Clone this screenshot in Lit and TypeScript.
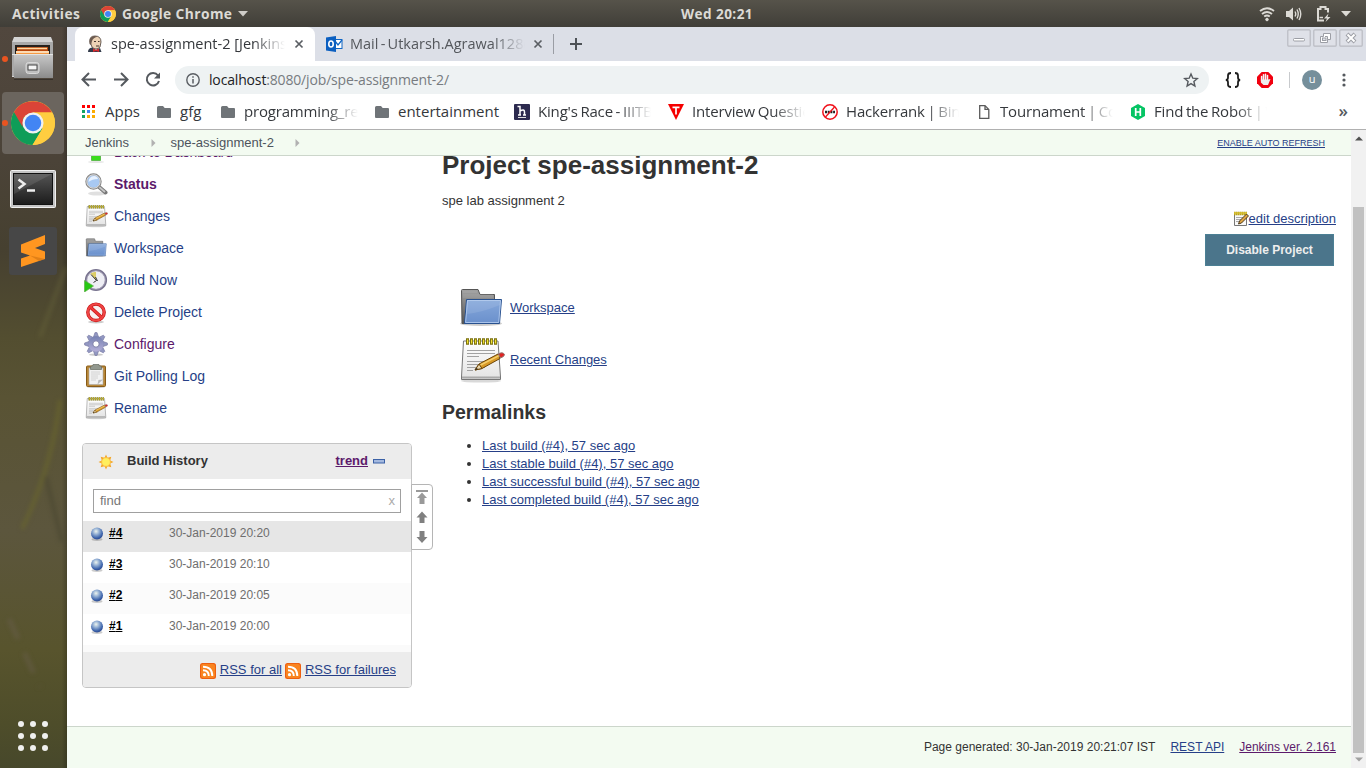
import { LitElement, html, css, svg, type TemplateResult } from "lit";
import { customElement } from "lit/decorators.js";

const chromeLogo = (size: number) => html`<svg width=${size} height=${size} viewBox="0 0 48 48">
  <circle cx="24" cy="24" r="24" fill="#fc3" />
  <path d="M24 24 L3.2 12 A24 24 0 0 0 23.5 48 L34.4 30Z" fill="#0f9d58" />
  <path d="M3.2 12 A24 24 0 0 1 44.8 12.5 H24 L13.6 18 L12.5 28Z" fill="#db4437" />
  <path d="M24 12.5 H45 A24 24 0 0 1 23.5 48 L34.4 30Z" fill="#ffcd40" />
  <circle cx="24" cy="24" r="11.5" fill="#f1f1f1" />
  <circle cx="24" cy="24" r="9" fill="#4285f4" />
</svg>`;

const filesIcon = html`<svg width="44" height="46" viewBox="0 0 44 46">
  <defs><linearGradient id="fl" x2="0" y2="1"><stop stop-color="#c9c9c9" /><stop offset="1" stop-color="#8b8b8b" /></linearGradient></defs>
  <path d="M3 1 H40 L42 6 V41 H1 V6Z" fill="#d4d4d4" />
  <path d="M1 6H42V40H1Z" fill="#a9a9a9" />
  <rect x="4" y="9" width="35" height="12" fill="#26211c" />
  <path d="M6 11H37V20H6Z" fill="#b8460c" /><path d="M6 12.500H36" stroke="#ffd9a0" stroke-width="1.500" />
  <path d="M5 15H38V20H5Z" fill="#f59a45" /><path d="M5 16H38" stroke="#fff0d8" stroke-width="1.500" />
  <path d="M1 18H42V42H3V18Z" fill="url(#fl)" /><path d="M1 18.500H42" stroke="#e4e4e4" />
  <rect x="15" y="26.500" width="13" height="11" rx="2.500" fill="#bfbfbf" stroke="#d9d9d9" />
  <rect x="17" y="29" width="9" height="5" fill="#f5f5f5" stroke="#444" />
  <path d="M3 43.500H42" stroke="#2d2924" opacity=".7" />
</svg>`;

const terminalIcon = html`<svg width="46" height="40" viewBox="0 0 46 40">
  <defs><linearGradient id="tg" x2="0" y2="1"><stop stop-color="#555" /><stop offset="1" stop-color="#1b1b1b" /></linearGradient></defs>
  <rect x=".5" y=".5" width="45" height="37" rx="1" fill="#c4c4c4" stroke="#f1f1f1" />
  <rect x="3.500" y="3.500" width="39" height="31" fill="url(#tg)" stroke="#111" />
  <path d="M4 4H42L4 24Z" fill="#fff" opacity=".1" />
  <path d="M8.500 9.500L14.500 14L8.500 18.500" fill="none" stroke="#eee" stroke-width="2.500" />
  <path d="M17 20.500H25" stroke="#eee" stroke-width="2.500" />
</svg>`;

const sublimeIcon = html`<svg width="48" height="48" viewBox="0 0 48 48">
  <rect width="48" height="48" rx="3" fill="#474747" />
  <path d="M12 17.500L36 8V17L26 21L36 24.500V32L12 40V31.500L21 28.500L12 25.500Z" fill="#ff9620" />
  <path d="M21 28.500L36 32L30 34Z" fill="#c96f10" opacity=".55" />
</svg>`;

const folder = html`<svg width="16" height="16" viewBox="0 0 16 16"><path d="M1.500 2H6L7.700 4H13Q14 4 14 5V13Q14 14 13 14H1Q0 14 0 13V3.500Q0 2 1.500 2Z" fill="#6f7478" /></svg>`;

const appsIcon = html`<svg width="16" height="16" viewBox="0 0 16 16">
  ${["#f00", "#f00", "#f00", "#13a463", "#4285f4", "#fbab00", "#13a463", "#fbab00", "#fbab00"].map(
    (c, i) => svg`<rect x=${(i % 3) * 5} y=${1 + Math.floor(i / 3) * 5} width="3" height="3" fill=${c} />`
  )}
</svg>`;

const hIcon = html`<svg width="16" height="16" viewBox="0 0 16 16"><rect width="16" height="16" rx="1" fill="#2c2a4f" />
  <path d="M3.500 2.500H6V11M4 11H7M6 7Q10.500 4.500 10.500 8V11M9 11H12" fill="none" stroke="#fff" stroke-width="1.500" /><path d="M4 13.500H12" stroke="#ddd" /></svg>`;

const tIcon = html`<svg width="16" height="16" viewBox="0 0 16 16"><path d="M0 0H16L8 16Z" fill="#f50000" /><path d="M4.500 3.300H11.500M8 3V10.500" stroke="#fff" stroke-width="1.700" /></svg>`;

const noIcon = html`<svg width="16" height="16" viewBox="0 0 16 16"><circle cx="8" cy="8" r="7.200" fill="#fff" stroke="#f0101a" stroke-width="1.500" />
  <path d="M3 8H13" stroke="#222" stroke-width="2.400" stroke-dasharray="2 .7" /><path d="M3.500 13L12.500 3" stroke="#f0101a" stroke-width="1.300" /></svg>`;

const pageIcon = html`<svg width="16" height="16" viewBox="0 0 16 16"><path d="M3.700 1.600H9L12.800 5.400V14.400H3.700Z M9 1.600V5.400H12.800" fill="none" stroke="#5a5a5a" stroke-width="1.300" /></svg>`;

const hackerIcon = html`<svg width="16" height="16" viewBox="0 0 16 16"><path d="M8 0L15 4V12L8 16L1 12V4Z" fill="#05c464" />
  <path d="M5.700 4V12M10.300 4V12M5.700 8H10.300" stroke="#fff" stroke-width="1.700" /></svg>`;

const jenkinsIcon = html`<svg width="16" height="18" viewBox="0 0 16 18">
  <path d="M3 7Q2 1 8 1Q14 1 14 7L13 12Q9 16 5 12Z" fill="#ecd2b5" stroke="#463b35" stroke-width=".8" />
  <path d="M2.500 9Q1.500 2 7 1L11 1.500Q6 2.500 5 6L4 10Z" fill="#6b5a50" />
  <path d="M7 6.500H9M11 6.500H12.500M9 11H12" stroke="#44372f" stroke-width="1" />
  <path d="M1 17Q1 13 5 12.500L9 15L13 13L14.500 17Z" fill="#333c4b" />
  <path d="M6 13.500L9 15L12 13.500V17L9 16L6 17Z" fill="#d52a2e" />
</svg>`;

const outlookIcon = html`<svg width="17" height="16" viewBox="0 0 17 16">
  <rect x="8" y="3.500" width="8" height="9" fill="#fff" stroke="#1066c4" /><path d="M9 5L12 9L16 4" fill="none" stroke="#1066c4" stroke-width="1.300" />
  <path d="M0 1.500L10 0V16L0 14.500Z" fill="#0b5fc0" /><ellipse cx="5" cy="8" rx="2.200" ry="3" fill="none" stroke="#fff" stroke-width="1.600" /></svg>`;

const notepad = (s: number) => html`<svg width=${s} height=${s} viewBox="0 0 48 48">
  <defs><linearGradient id="np" x2="0" y2="1"><stop stop-color="#fff" /><stop offset="1" stop-color="#e3e3e3" /></linearGradient></defs>
  <ellipse cx="24" cy="45" rx="20" ry="1.600" fill="#000" opacity=".15" />
  <path d="M6.500 5H41L43.500 41V43.500H4.500V41Z" fill="url(#np)" stroke="#777" />
  <path d="M5 41.500H43" stroke="#aaa" stroke-width="2" />
  <path d="M10 14.500H38M10 17.500H38M10 20.500H22M10 25.500H36M10 28.500H30M10 31.500H28M10 34.500H16" stroke="#a2a2a2" />
  <path d="M9 5.500H41" stroke="#7a7010" stroke-width="6.500" stroke-dasharray="3 1" />
  <path d="M10 5.500H40" stroke="#f0e030" stroke-width="4" stroke-dasharray="1.200 2.800" />
  <path d="M18 34L22 28L41 18L43 22.500L25 32.500Z" fill="#d99a27" stroke="#6b4508" />
  <path d="M23.500 29L42 19.600" stroke="#f5cf6d" stroke-width="1.500" />
  <path d="M18 34L22 28L25 32.500Z" fill="#e9d6ae" stroke="#6b4508" /><path d="M18 34L19.500 32L21 33Z" fill="#222" />
  <path d="M41.500 17.800Q46 15.500 47.500 18.500Q47.500 20.500 43.500 22Z" fill="#e02323" stroke="#8f7770" />
</svg>`;

const notepadSmall = html`<svg width="16" height="16" viewBox="0 0 16 16">
  <path d="M.5 2H12.500V14.500H.5Z" fill="#fafafa" stroke="#777" />
  <path d="M2 6.500H9M2 8.500H7M2 10.500H6" stroke="#aaa" />
  <path d="M0 2.500H13" stroke="#a89010" stroke-width="3.500" stroke-dasharray="1.600 .4" /><path d="M.5 2.300H13" stroke="#f8df3a" stroke-width="2.400" stroke-dasharray="1 1" />
  <path d="M4.500 13L5.500 10L12.500 3L14.500 5L7.500 12Z" fill="#dfa545" stroke="#3c2a10" stroke-width=".9" />
</svg>`;

const folderBlue = (s: number) => html`<svg width=${s} height=${s} viewBox="0 0 48 48">
  <defs><linearGradient id="fb" x2="0" y2="1"><stop stop-color="#86a8db" /><stop offset="1" stop-color="#6a90cc" /></linearGradient>
  <linearGradient id="fg" x2="0" y2="1"><stop stop-color="#a2a2a2" /><stop offset="1" stop-color="#555" /></linearGradient></defs>
  <ellipse cx="24" cy="39.500" rx="21" ry="2.500" fill="#000" opacity=".2" />
  <path d="M4.500 6.500Q4.500 5.500 5.500 5.500H21L23 10.500H37.500V39.500H5Z" fill="url(#fg)" stroke="#555" />
  <path d="M6 8H20M6 11H36M6 13H36" stroke="#bbb" stroke-width=".7" opacity=".5" />
  <path d="M9.500 15.500H44.500L42.500 39.500H7.500Z" fill="url(#fb)" stroke="#28518f" />
  <path d="M10.500 16.500H43.500L41.700 38.500H8.600Z" fill="none" stroke="#a9c3ea" />
  <path d="M10 30Q23 29 43 21L44 16H10Z" fill="#fff" opacity=".1" />
</svg>`;

const statusIcon = html`<svg width="24" height="24" viewBox="0 0 24 24">
  <ellipse cx="13" cy="21.500" rx="9" ry="2" fill="#000" opacity=".12" />
  <path d="M14.500 14.500L21.500 20.500" stroke="#777" stroke-width="4" stroke-linecap="round" /><path d="M14.500 14.500L21 20" stroke="#c5c5c5" stroke-width="1.800" />
  <circle cx="9.500" cy="9.500" r="7.200" fill="#a8c9f3" stroke="#888" stroke-width="2" /><circle cx="9.500" cy="9.500" r="6.700" fill="none" stroke="#e2e2e2" />
  <path d="M4.500 10Q5 4.500 10 4Q13 4 14 7Q8 7 4.500 10Z" fill="#e8f2ff" />
</svg>`;

const buildIcon = html`<svg width="24" height="24" viewBox="0 0 24 24">
  <circle cx="12" cy="12" r="10" fill="#eeeef4" stroke="#77728e" stroke-width="2.200" /><circle cx="12" cy="12" r="9.300" fill="none" stroke="#b4b0c4" stroke-width=".7" />
  <path d="M12 12L6.500 5.500Q9 3.500 12 4Z" fill="#dccd68" /><path d="M7 6.500L12.500 12.500L9.500 14.500M11.500 9L13.500 13" fill="none" stroke="#333" stroke-width="1" />
  <path d="M.5 12.500L9.500 18L.5 24Z" fill="#28c814" stroke="#5fae4c" stroke-width=".7" />
</svg>`;

const deleteIcon = html`<svg width="24" height="24" viewBox="0 0 24 24">
  <ellipse cx="12" cy="22" rx="8" ry="1.500" fill="#000" opacity=".2" />
  <circle cx="12" cy="12.300" r="8.200" fill="#f7f1f1" stroke="#c71616" stroke-width="3.400" /><path d="M6 6.800L18 17.800" stroke="#c71616" stroke-width="3.400" />
  <circle cx="12" cy="12.300" r="8.200" fill="none" stroke="#f04646" stroke-width="2" /><path d="M6 6.800L18 17.800" stroke="#ef3b3b" stroke-width="2" />
</svg>`;

const gearIcon = html`<svg width="24" height="24" viewBox="0 0 24 24">
  <defs><linearGradient id="gr" gradientUnits="userSpaceOnUse" x1="0" y1="0" x2="0" y2="23"><stop stop-color="#6474a8" /><stop offset="1" stop-color="#c3b9e0" /></linearGradient></defs>
  <ellipse cx="12" cy="22.700" rx="7" ry="1.200" fill="#000" opacity=".2" />
  <g fill="#9298c2" stroke="#7a7ba4" stroke-width=".7">${[0, 45, 90, 135, 180, 225, 270, 315].map(
    (a) => svg`<path d="M9.500 5L11 .6H13L14.500 5Z" transform="rotate(${a} 12 12)" />`
  )}</g>
  <circle cx="12" cy="12" r="7.700" fill="url(#gr)" /><circle cx="12" cy="12" r="3.200" fill="#fff" stroke="#7474a0" stroke-width=".9" />
</svg>`;

const clipIcon = html`<svg width="24" height="24" viewBox="0 0 24 24">
  <ellipse cx="12" cy="23" rx="9" ry="1" fill="#000" opacity=".2" />
  <rect x="2.500" y="2" width="19" height="20.500" rx="1" fill="#b98838" stroke="#885b17" />
  <path d="M5 4H19V20.500H5Z" fill="#f2f2f2" stroke="#aaa" stroke-width=".6" />
  <path d="M7 8H16M7 10H16M7 12H14M7 14H14M7 16H12" stroke="#ccc" stroke-width=".8" />
  <path d="M13.500 20.500L14.500 16L19 15.500Z" fill="#b9b9b9" /><path d="M6.500 5.500V2.500L9 1.500V.5H15V1.500L17.500 2.500V5.500Z" fill="#92988e" stroke="#666c62" stroke-width=".7" />
</svg>`;

const upIcon = html`<svg width="24" height="24" viewBox="0 0 24 24"><path d="M7.500 20.500V12H2L12 1L22 12H16.500V20.500Z" fill="#3add1c" stroke="#208d0e" stroke-width=".5" /><ellipse cx="12" cy="22" rx="8" ry="1" fill="#000" opacity=".1" /></svg>`;

const sunIcon = html`<svg width="16" height="16" viewBox="0 0 16 16">
  <path d="M8 .5L9.500 3.800L13.300 2.700L12.200 6.500L15.500 8L12.200 9.500L13.300 13.300L9.500 12.200L8 15.500L6.500 12.200L2.700 13.300L3.800 9.500L.5 8L3.800 6.500L2.700 2.700L6.500 3.800Z" fill="#f4a82a" />
  <circle cx="8" cy="8" r="4.300" fill="#ffef5e" stroke="#fbc14a" stroke-width=".8" /></svg>`;

const ball = html`<svg width="16" height="16" viewBox="0 0 16 16">
  <defs><radialGradient id="bl" cx=".42" cy=".32" r=".65"><stop stop-color="#edf4ee" /><stop offset=".4" stop-color="#94b0d4" /><stop offset=".85" stop-color="#3c63ab" /><stop offset="1" stop-color="#304f95" /></radialGradient></defs>
  <ellipse cx="8" cy="13.500" rx="5.500" ry="1.400" fill="#000" opacity=".2" /><circle cx="8" cy="7.500" r="6" fill="url(#bl)" /></svg>`;

const rss = html`<svg width="16" height="16" viewBox="0 0 16 16"><rect width="16" height="16" rx="2.500" fill="#ed5f10" /><rect x="1" y="1" width="14" height="14" rx="2" fill="#f98420" />
  <circle cx="4.500" cy="11.700" r="1.600" fill="#fff" /><path d="M3 7.200Q8.800 7.200 8.800 13M3 3.700Q12.300 3.700 12.300 13" fill="none" stroke="#fff" stroke-width="1.900" /></svg>`;

const xIcon = html`<svg width="10" height="10" viewBox="0 0 10 10"><path d="M1.500 1.500L8.500 8.500M8.500 1.500L1.500 8.500" stroke="#5a5e63" stroke-width="1.700" /></svg>`;

const arrowMark = html`<svg width="5" height="8" viewBox="0 0 5 8"><path d="M.5 0L4.500 4L.5 8Z" fill="#b1b1b1" /></svg>`;

const bookmarks: { icon: TemplateResult; label: string; width: number; kind: string }[] = [
  { icon: appsIcon, label: "Apps", width: 35, kind: "near" },
  { icon: folder, label: "gfg", width: 24, kind: "near" },
  { icon: folder, label: "programming_resources", width: 114, kind: "near long" },
  { icon: folder, label: "entertainment", width: 99, kind: "near snug" },
  { icon: hIcon, label: "King's Race - IIITB", width: 113, kind: "long" },
  { icon: tIcon, label: "Interview Questions", width: 113, kind: "long" },
  { icon: noIcon, label: "Hackerrank | Binary", width: 113, kind: "long" },
  { icon: pageIcon, label: "Tournament | Code", width: 113, kind: "long" },
  { icon: hackerIcon, label: "Find the Robot | W", width: 113, kind: "long" },
];

@customElement("desktop-bar")
class DesktopBar extends LitElement {
  static styles = css`
    :host { display: grid; grid-template-columns: 681px 74px 1fr; height: 27px; align-items: center; color: #dcdad5;
      background: linear-gradient(#56534a, #403e38); font: 700 13.8px/26px "Open Sans", sans-serif; }
    .left, .right { display: flex; align-items: center; }
    .left { padding-left: 12px; }
    .act { width: 88px; letter-spacing: .42px; }
    .app { width: 110px; margin: 0 6px 0 6px; white-space: nowrap; letter-spacing: .4px; }
    .clock { white-space: nowrap; font-size: 13.6px; letter-spacing: .42px; }
    .right { justify-content: flex-end; padding-right: 15px; }
    svg { display: block; flex: none; }
    .wifi { margin-right: 11px; } .vol { margin-right: 14px; } .bat { margin-right: 9px; }
  `;
  render() {
    return html`
      <div class="left"><span class="act">Activities</span>${chromeLogo(16)}<span class="app">Google Chrome</span>
        <svg width="10" height="6" viewBox="0 0 10 6"><path d="M0 0H10L5 5.500Z" fill="#cfcdc8" /></svg></div>
      <div class="clock">Wed 20:21</div>
      <div class="right">
        <svg class="wifi" width="16" height="16" viewBox="0 0 16 16" fill="none" stroke="#dcdad5" stroke-width="1.900"><path d="M1 5Q8-.5 15 5M3 8Q8 4 13 8M5.200 10.600Q8 8.500 10.800 10.600" /><circle cx="8" cy="13.500" r="1.300" fill="#dcdad5" stroke-width="1" /></svg>
        <svg class="vol" width="16" height="16" viewBox="0 0 16 16"><path d="M0 5H3L7 1.500V14.500L3 11H0Z" fill="#dcdad5" /><path d="M9 5.500Q10.500 8 9 10.500M11 3.500Q13.500 8 11 12.500M13 2Q16.500 8 13 14" fill="none" stroke="#dcdad5" stroke-width="1.400" /></svg>
        <svg class="bat" width="16" height="16" viewBox="0 0 16 16"><path d="M8 14.500H2V3H4.500V1H9.500V3H12V6.500" fill="none" stroke="#dcdad5" stroke-width="2" /><path d="M3.500 11.500H7" stroke="#dcdad5" stroke-width="1.500" /><path d="M12.500 7.500L8 12.500H11L9.500 16L14.500 11H11.500Z" fill="#dcdad5" /></svg>
        <svg width="10" height="6" viewBox="0 0 10 6"><path d="M0 0H10L5 5.500Z" fill="#dcdad5" /></svg>
      </div>`;
  }
}

@customElement("app-dock")
class AppDock extends LitElement {
  static styles = css`
    :host { display: flex; flex-direction: column; width: 67px; position: relative; overflow: hidden;
      background: linear-gradient(90deg, #0000 92%, #0003), linear-gradient(#51473e 0, #4b4338 18%, #464030 30%, #534e30 42%, #595334 50%, #5c563d 68%, #58542d 84%, #4e4d2a 94%, #47482b 100%); }
    svg { display: block; }
    .grass { position: absolute; inset: 0; filter: blur(2px); }
    .slot { display: flex; align-items: center; justify-content: center; width: 62px; height: 62px; margin: 0 0 2px 2px; position: relative; border-radius: 4px; }
    .slot.on { background: #6b655e; }
    .slot.term { height: 64px; padding-top: 4px; box-sizing: border-box; margin-bottom: 0; }
    .run::before { content: ""; position: absolute; left: 0; top: 28px; width: 6px; height: 6px; border-radius: 3px; background: #e95420; }
    .grid { margin: auto 0 17px 18px; position: relative; }
  `;
  render() {
    return html`
      <svg class="grass" width="67" height="741" viewBox="0 0 67 741"><path d="M60 373Q52 440 22 502" stroke="#6c692c" stroke-width="4" fill="none" opacity=".6" /><path d="M46 450L62 515" stroke="#4d4933" stroke-width="4" opacity=".8" /><path d="M9 592L40 660" stroke="#6c6050" stroke-width="5" opacity=".45" stroke-dasharray="22 15" /><path d="M66 240L40 310" stroke="#6d693e" stroke-width="4" opacity=".4" /></svg>
      <div class="slot run">${filesIcon}</div>
      <div class="slot on run">${chromeLogo(44)}</div>
      <div class="slot term">${terminalIcon}</div>
      <div class="slot">${sublimeIcon}</div>
      <svg class="grid" width="30" height="30" viewBox="0 0 30 30">${[0, 1, 2, 3, 4, 5, 6, 7, 8].map((i) => svg`<circle cx=${3 + (i % 3) * 12} cy=${3 + Math.floor(i / 3) * 12} r="3" fill="#f0f0ee" />`)}</svg>`;
  }
}

@customElement("browser-chrome")
class BrowserChrome extends LitElement {
  static styles = css`
    :host { display: block; height: 102px; background: #fff; border-bottom: 1px solid #b0b0b0; font: 15px/20px "Open Sans", sans-serif; color: #35383c; }
    svg { display: block; flex: none; }
    .strip { display: flex; height: 34px; background: #dcdfe7; }
    .tab { display: flex; align-items: center; width: 240px; padding: 0 11px 0 12px; box-sizing: border-box; font-size: 14.5px; }
    .tab.on { background: #fff; border-radius: 8px 8px 0 0; margin-left: 8px; }
    .tab.off { padding: 0 12px 0 11px; color: #54575c; }
    .title { width: 175px; margin: 0 9px 0 8px; overflow: hidden; white-space: nowrap; }
    .off .title { margin: 0 8px 0 7px; word-spacing: -1.5px; }
    .fade { -webkit-mask-image: linear-gradient(90deg, #000 calc(100% - 32px), transparent); mask-image: linear-gradient(90deg, #000 calc(100% - 32px), transparent); }
    .sep { width: 1px; height: 20px; background: #9a9da4; margin: 7px 16px 0 -2px; }
    .plus { margin-top: 11px; }
    .win { display: flex; gap: 2px; margin: 2px 3px 0 auto; }
    .tools { display: flex; align-items: center; height: 33px; padding-top: 5px; box-sizing: border-box; }
    .nav { display: flex; gap: 14px; margin-left: 13px; }
    .url { display: flex; align-items: center; width: 1034px; height: 28px; margin-left: 13px; border-radius: 14px; background: #eef2f3; padding: 0 10px; box-sizing: border-box; font-size: 14px; letter-spacing: -.16px; color: #777b80; }
    .url span { margin-left: 8px; } .url b { font-weight: 400; color: #202124; } .star { margin-left: auto; }
    .ext { display: flex; align-items: center; }
    .braces { margin: 0 16px 0 16px; } .line { width: 1px; height: 16px; background: #c8cacd; margin: 0 12px 0 16px; }
    .avatar { width: 20px; height: 20px; border-radius: 50%; background: #758f9b; color: #fff; font-size: 11px; line-height: 18px; text-align: center; margin-right: 20px; }
    .marks { display: flex; align-items: center; height: 35px; padding-left: 15px; }
    .mark { display: flex; align-items: center; gap: 8px; margin-right: 17px; }
    .mark.near { gap: 7px; }
    .label { overflow: hidden; white-space: nowrap; height: 22px; }
    .snug .label { overflow: visible; }
    .long .label { letter-spacing: -.18px; word-spacing: -1px; }
    .more { margin: -2px 18px 0 auto; font-size: 17px; font-weight: 600; color: #55595e; }
  `;
  render() {
    return html`
      <div class="strip">
        <div class="tab on">${jenkinsIcon}<span class="title fade">spe-assignment-2 [Jenkins]</span>${xIcon}</div>
        <div class="tab off">${outlookIcon}<span class="title fade">Mail - Utkarsh.Agrawal128@</span>${xIcon}</div>
        <span class="sep"></span>
        <svg class="plus" width="12" height="12" viewBox="0 0 12 12"><path d="M6 0V12M0 6H12" stroke="#4e5257" stroke-width="2" /></svg>
        <div class="win">${[0, 1, 2].map(
          (i) => html`<svg width="24" height="18" viewBox="0 0 24 18"><rect x=".8" y=".8" width="22.400" height="16.400" rx="1" fill="#dfe1e8" stroke="#b9bbc2" stroke-width="1.200" />
            ${i === 0 ? svg`<rect x="6.500" y="9.500" width="11" height="2.500" rx="1" fill="#fff" stroke="#9c9ea5" />`
              : i === 1 ? svg`<path d="M10.500 4.500H17.500V10.500H14.500V13.500H7.500V7.500H10.500Z" fill="#fff" stroke="#9c9ea5" /><rect x="9.500" y="9" width="3.500" height="2.500" fill="#dfe1e8" stroke="#9c9ea5" /><path d="M12 7.500H14.500V10.500" fill="none" stroke="#9c9ea5" />`
              : svg`<path d="M8 5L16 13M16 5L8 13" stroke="#9c9ea5" stroke-width="4" /><path d="M8.500 5.500L15.500 12.500M15.500 5.500L8.500 12.500" stroke="#fff" stroke-width="2" />`}
          </svg>`)}</div>
      </div>
      <div class="tools">
        <div class="nav">
          <svg width="18" height="18" viewBox="0 0 18 18" fill="none" stroke="#55595e" stroke-width="2"><path d="M16 8.500H3M9 2L2.500 8.500L9 15" /></svg>
          <svg width="18" height="18" viewBox="0 0 18 18" fill="none" stroke="#55595e" stroke-width="2"><path d="M2 8.500H15M9 2L15.500 8.500L9 15" /></svg>
          <svg width="18" height="18" viewBox="0 0 18 18" fill="none" stroke="#55595e" stroke-width="2"><path d="M14 4.500A6.200 6.200 0 1 0 15 10" /><path d="M16 1.500V7.500H10Z" fill="#55595e" stroke="none" /></svg>
        </div>
        <div class="url">
          <svg width="16" height="16" viewBox="0 0 16 16"><circle cx="8" cy="8" r="6.200" fill="none" stroke="#5a5e63" stroke-width="1.400" /><path d="M8 7V11.500M8 4.300V5.800" stroke="#5a5e63" stroke-width="1.500" /></svg>
          <span><b>localhost</b>:8080/job/spe-assignment-2/</span>
          <svg class="star" width="16" height="16" viewBox="0 0 16 16"><path d="M8 2L9.800 6.200L14.300 6.600L10.900 9.500L11.900 14L8 11.600L4.100 14L5.100 9.500L1.700 6.600L6.200 6.200Z" fill="none" stroke="#55595e" stroke-width="1.400" /></svg>
        </div>
        <div class="ext">
          <svg class="braces" width="16" height="16" viewBox="0 0 16 16"><path d="M6 1Q3 1 3 3.500V5.500Q3 8 .8 8Q3 8 3 10.500V12.500Q3 15 6 15M10 1Q13 1 13 3.500V5.500Q13 8 15.200 8Q13 8 13 10.500V12.500Q13 15 10 15" fill="none" stroke="#1e1e1e" stroke-width="1.800" /></svg>
          <svg width="16" height="16" viewBox="0 0 16 16"><path d="M4.700 0H11.300L16 4.700V11.300L11.300 16H4.700L0 11.300V4.700Z" fill="#f1000f" /><path d="M4.600 9V4.500M6.500 8V2.800M8.500 8V2.300M10.500 8V3.500" stroke="#f4f4f4" stroke-width="1.500" stroke-linecap="round" /><path d="M3.900 7.500H11.300L13.500 7L11 13H6.500L3.900 10.500Z" fill="#eee" /></svg>
          <span class="line"></span><span class="avatar">u</span>
          <svg width="4" height="14" viewBox="0 0 4 14" fill="#55595e"><circle cx="2" cy="2" r="1.600" /><circle cx="2" cy="7" r="1.600" /><circle cx="2" cy="12" r="1.600" /></svg>
        </div>
      </div>
      <div class="marks">${bookmarks.map(
        (b) => html`<div class="mark ${b.kind}">${b.icon}<span class="label ${b.kind.includes("long") ? "fade" : ""}" style="width:${b.width}px">${b.label}</span></div>`
      )}<span class="more">»</span></div>`;
  }
}

@customElement("build-history")
class BuildHistory extends LitElement {
  static styles = css`
    :host { display: block; position: relative; width: 330px; height: 245px; box-sizing: border-box; }
    svg { display: block; flex: none; }
    a { color: #263f87; text-decoration: underline; }
    .panel { height: 245px; box-sizing: border-box; border: 1px solid #c5c5c5; border-radius: 4px; overflow: hidden; display: flex; flex-direction: column; }
    .head { display: flex; align-items: center; height: 35px; background: #ececec; padding: 0 26px 0 15px; font-weight: bold; }
    .head span { margin: -2px auto 0 13px; } .head a { color: #5c1a6b; margin: -2px 5px 0 0; }
    .find { display: flex; justify-content: space-between; align-items: center; margin: 10px 10px 8px; height: 24px; box-sizing: border-box; border: 1px solid #a0a0a0; padding: 0 5px 1px 6px; color: #777; }
    .find i { font-style: normal; color: #aaa; }
    .row { display: flex; height: 31px; box-sizing: border-box; padding: 4px 0 0 6px; font-size: 12px; line-height: 16px; color: #6e6e6e; }
    .row.first { background: #e6e6e6; } .row.alt { background: #fbfbfb; }
    .row a { width: 60px; margin-left: 4px; color: #000; font-weight: bold; }
    .row svg { margin-top: 1px; }
    .tail { flex: 1; background: #fafafa; }
    .foot { display: flex; align-items: center; justify-content: flex-end; height: 33px; padding-top: 2px; background: #ececec; padding-right: 15px; }
    .foot a { margin: 0 3px 2px 4px; } .foot a:last-child { margin-right: 0; margin-left: 4px; }
    .jump { position: absolute; left: 329px; top: 41px; width: 22px; height: 66px; box-sizing: border-box; border: 1px solid #b5b5b5; border-radius: 0 4px 4px 0; background: #fff; }
  `;
  render() {
    return html`
      <div class="panel">
        <div class="head">${sunIcon}<span>Build History</span><a>trend</a><svg width="12" height="5" viewBox="0 0 12 5"><rect x=".5" y=".5" width="11" height="3.500" fill="#a4b9df" stroke="#3b61a6" /></svg></div>
        <div class="find">find<i>x</i></div>
        ${["20:20", "20:10", "20:05", "20:00"].map(
          (t, i) => html`<div class="row ${i === 0 ? "first" : i === 2 ? "alt" : ""}">${ball}<a>#${4 - i}</a>30-Jan-2019 ${t}</div>`
        )}
        <div class="tail"></div>
        <div class="foot">${rss}<a>RSS for all</a>${rss}<a>RSS for failures</a></div>
      </div>
      <div class="jump"><svg width="20" height="64" viewBox="0 0 20 64" fill="#808080">
        <g opacity=".8"><path d="M4 5H16V7H4ZM10 7.500L15 13H12.500V19H7.500V13H5Z" /></g>
        <path d="M10 26.500L15.500 32.500H12.500V38H7.500V32.500H4.500Z" /><path d="M7.500 46H12.500V52H15.500L10 58L4.500 52H7.500Z" />
      </svg></div>`;
  }
}

@customElement("jenkins-page")
class JenkinsPage extends LitElement {
  static styles = css`
    :host { display: grid; grid-template-columns: 1fr 15px; flex: 1; min-height: 0; font: 13px/18px "Liberation Sans", Arial, sans-serif; color: #333; background: #fff; }
    svg { display: block; flex: none; }
    a { color: #263f87; text-decoration: underline; }
    .doc { display: flex; flex-direction: column; min-width: 0; min-height: 0; }
    .crumbs { display: flex; align-items: center; height: 26px; flex: none; box-sizing: border-box; border-bottom: 1px solid #ccd6cb; background: #f3fbf1; padding: 0 26px 0 18px; color: #4d545d; }
    .crumbs svg { margin: 1px 15px 0 21.500px; }
    .crumbs a { margin-left: auto; font-size: 9px; }
    .body { display: flex; height: 570px; flex: none; overflow: hidden; }
    .side { width: 345px; margin-left: 15px; margin-top: -20px; flex: none; }
    .task { display: flex; align-items: center; gap: 6px; height: 32px; padding-left: 2px; font-size: 14px; color: #263f87; }
    .task.seen { color: #5c1a6b; } .task.bold { font-weight: bold; }
    build-history { margin-top: 19px; }
    .main { flex: 1; margin: 0 15px; display: flex; flex-direction: column; }
    h1 { font-size: 26px; line-height: 30px; margin: -6px 0 0; }
    .desc { margin-top: 12px; }
    .edit { display: flex; align-items: center; justify-content: flex-end; height: 18px; }
    .edit svg { margin-right: -1px; }
    .off { align-self: flex-end; width: 129px; height: 32px; margin: 6px 2px 0 0; box-sizing: border-box; border: 1px solid #4c8094; background: #4b758b; color: #eee; font-weight: bold; font-size: 12px; line-height: 30px; text-align: center; }
    .links { display: flex; flex-direction: column; gap: 4px; margin: 18px 0 0 15px; }
    .links div { display: flex; align-items: center; gap: 5px; height: 48px; }
    h2 { font-size: 19.5px; line-height: 24px; margin: 16px 0 13px; }
    ul { margin: 0; padding-left: 40px; }
    .foot { display: flex; align-items: center; justify-content: flex-end; gap: 15px; flex: 1; border-top: 1px solid #ccd6cb; background: #f3fbf1; padding: 0 15px 2px 0; font-size: 12px; }
    .foot a:last-child { color: #5c1a6b; }
    .scroll { display: flex; flex-direction: column; align-items: center; background: #f1f1f1; }
    .thumb { width: 11px; height: 546px; background: #c1c1c1; margin-top: 66px; }
    .down { margin-top: 4px; } .up { margin-top: 6px; }
  `;
  render() {
    const tasks: [TemplateResult, string, string][] = [
      [upIcon, "Back to Dashboard", "seen"], [statusIcon, "Status", "seen bold"], [notepad(24), "Changes", ""],
      [folderBlue(24), "Workspace", ""], [buildIcon, "Build Now", ""], [deleteIcon, "Delete Project", ""],
      [gearIcon, "Configure", "seen"], [clipIcon, "Git Polling Log", ""], [notepad(24), "Rename", ""],
    ];
    return html`
      <div class="doc">
        <div class="crumbs">Jenkins${arrowMark}spe-assignment-2${arrowMark}<a>ENABLE AUTO REFRESH</a></div>
        <div class="body">
          <div class="side">
            ${tasks.map(([icon, label, kind]) => html`<div class="task ${kind}">${icon}<span>${label}</span></div>`)}
            <build-history></build-history>
          </div>
          <div class="main">
            <h1>Project spe-assignment-2</h1>
            <div class="desc">spe lab assignment 2</div>
            <div class="edit">${notepadSmall}<a>edit description</a></div>
            <div class="off">Disable Project</div>
            <div class="links"><div>${folderBlue(48)}<a>Workspace</a></div><div>${notepad(48)}<a>Recent Changes</a></div></div>
            <h2>Permalinks</h2>
            <ul>${["build", "stable build", "successful build", "completed build"].map((k) => html`<li><a>Last ${k} (#4), 57 sec ago</a></li>`)}</ul>
          </div>
        </div>
        <div class="foot"><span>Page generated: 30-Jan-2019 20:21:07 IST</span><a>REST API</a><a>Jenkins ver. 2.161</a></div>
      </div>
      <div class="scroll">
        <svg class="up" width="8" height="5" viewBox="0 0 8 5"><path d="M0 4.500L4 .5L8 4.500Z" fill="#505050" /></svg>
        <div class="thumb"></div>
        <svg class="down" width="8" height="5" viewBox="0 0 8 5"><path d="M0 .5L4 4.500L8 .5Z" fill="#a0a0a0" /></svg>
      </div>`;
  }
}

@customElement("app-root")
class AppRoot extends LitElement {
  static styles = css`
    :host { display: flex; flex-direction: column; width: 1366px; height: 768px; overflow: hidden; }
    .work { display: flex; flex: 1; min-height: 0; }
    .window { display: flex; flex-direction: column; flex: 1; min-width: 0; }
    app-dock { padding-top: 1px; box-sizing: border-box; flex: none; }
  `;
  render() {
    return html`<desktop-bar></desktop-bar>
      <div class="work"><app-dock></app-dock><div class="window"><browser-chrome></browser-chrome><jenkins-page></jenkins-page></div></div>`;
  }
}
